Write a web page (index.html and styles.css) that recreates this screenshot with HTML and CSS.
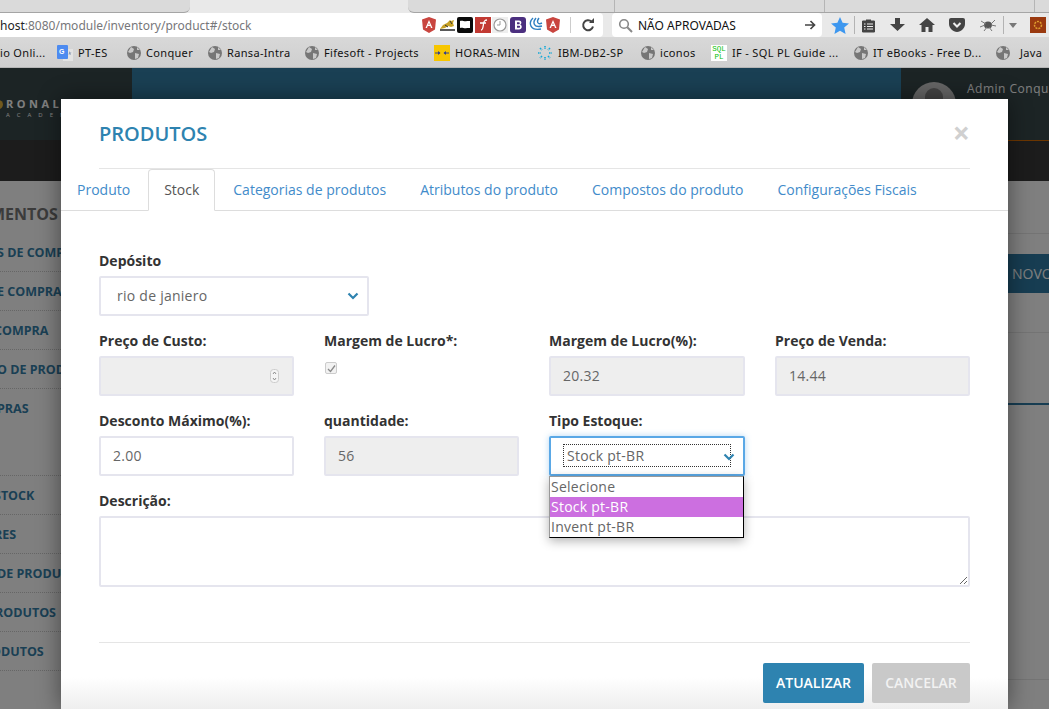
FILE: index.html
```html
<!DOCTYPE html>
<html lang="pt-BR">
<head>
<meta charset="utf-8">
<title>Produtos</title>
<link rel="stylesheet" href="styles.css">
</head>
<body>
<div class="browser">
  <div class="tabstrip">
    <div class="tab-side"></div>
    <div class="tab-active"></div>
    <div class="tab-rest"><i></i><i></i><i></i></div>
  </div>
  <div class="toolbar">
    <div class="address">
      <span class="url"><b>host</b>:8080/module/inventory/product#/stock</span>
      <div class="ext-icons">
        <svg width="16" height="16" viewBox="0 0 16 16"><path d="M8 0l7 2.500-1 10L8 16l-6-3.500-1-10z" fill="#c9453f"/><path d="M8 3l-3.500 8h1.500l.7-2h2.600l.7 2h1.500zM7.300 7.800L8 6l.7 1.800z" fill="#fff"/></svg>
        <svg width="17" height="16" viewBox="0 0 17 16"><path d="M1 12l3-4 4-2 3-3 1 1 3-1-1 3 1 3-3 1-3-1-3 2z" fill="#c9a227"/><path d="M1 13h15" stroke="#222" stroke-width="1.500"/><path d="M6 8l3 2M11 4l2 3" stroke="#333"/></svg>
        <svg width="16" height="16" viewBox="0 0 16 16"><rect width="16" height="16" rx="2" fill="#0a0a0a"/><path d="M3 4c3-1 4 1 7 0h3v7h-3c-3 1-4-1-7 0z" fill="#fff"/></svg>
        <svg width="16" height="16" viewBox="0 0 16 16"><rect width="16" height="16" fill="#c23a33"/><path d="M6 13c2 0 2-3 2.500-6s1-4 3.500-4M5 6h6" stroke="#fff" stroke-width="1.300" fill="none"/></svg>
        <svg width="16" height="16" viewBox="0 0 16 16"><rect width="16" height="16" fill="#eee"/><circle cx="8" cy="8" r="6" fill="#fff" stroke="#999" stroke-width="1.200"/><path d="M8 4v4H5" stroke="#999" fill="none"/></svg>
        <svg width="16" height="16" viewBox="0 0 16 16"><rect width="16" height="16" rx="3" fill="#4b2f7f"/><path d="M5 3.500h4c3 0 3 3.500 1 4 2.500.5 2.500 5-1 5H5zM7 5.200v2h2c1 0 1-2 0-2zM7 8.800v2h2.200c1.200 0 1.200-2 0-2z" fill="#fff" fill-rule="evenodd"/></svg>
        <svg width="16" height="16" viewBox="0 0 16 16"><path d="M6 1C1 6 3 14 14 12M9 1C5 6 7 11 15 9M12 1C9 5 11 8 15 6" stroke="#2f7fc1" stroke-width="1.400" fill="none"/></svg>
        <svg width="16" height="16" viewBox="0 0 16 16"><path d="M8 0l7 2.500-1 10L8 16l-6-3.500-1-10z" fill="#c9453f"/><path d="M8 3l-3.500 8h1.500l.7-2h2.600l.7 2h1.500zM7.300 7.800L8 6l.7 1.800z" fill="#fff"/></svg>
      </div>
      <span class="address-sep"></span>
      <svg class="reload" width="16" height="16" viewBox="0 0 16 16"><path d="M13 9.500A5 5 0 1 1 11.500 4.500" fill="none" stroke="#444" stroke-width="2"/><path d="M9 6h5V1z" fill="#444"/></svg>
    </div>
    <div class="search">
      <svg width="15" height="15" viewBox="0 0 15 15"><circle cx="6" cy="6" r="4.300" fill="none" stroke="#888" stroke-width="1.600"/><path d="M9.300 9.300l4.700 4.700" stroke="#888" stroke-width="2"/></svg>
      <span class="search-text">NÃO APROVADAS</span>
      <svg width="12" height="12" viewBox="0 0 12 12"><path d="M1 6h9M6.500 2l4 4-4 4" fill="none" stroke="#444" stroke-width="1.700"/></svg>
    </div>
    <div class="tools">
      <svg width="18" height="17" viewBox="0 0 18 17"><path d="M9 0l2.600 5.800 6.400.6-4.800 4.200 1.400 6.400L9 13.700 3.400 17l1.400-6.400L0 6.400l6.400-.6z" fill="#3d97ef"/></svg>
      <span class="tool-sep"></span>
      <svg width="15" height="15" viewBox="0 0 15 15"><path d="M1.500 3h12v11h-12z" fill="#444" stroke="#444" stroke-linejoin="round"/><path d="M5 1.500h5V4H5z" fill="#444"/><path d="M3 6h1.500M6 6h6M3 8.500h1.500M6 8.500h6M3 11h1.500M6 11h6" stroke="#eee"/></svg>
      <svg width="15" height="15" viewBox="0 0 15 15"><path d="M5 0h5v6h5l-7.500 7L0 6h5z" fill="#444"/></svg>
      <svg width="16" height="14" viewBox="0 0 16 14"><path d="M8 0L0 7h2.500v7h4V9h3v5h4V7H16z" fill="#444"/></svg>
      <svg width="16" height="14" viewBox="0 0 16 14"><path d="M2 0h12a2 2 0 0 1 2 2v4c0 4-4 8-8 8S0 10 0 6V2a2 2 0 0 1 2-2z" fill="#444"/><path d="M4.500 5L8 8.500 11.500 5" fill="none" stroke="#eee" stroke-width="2"/></svg>
      <svg width="18" height="14" viewBox="0 0 18 14"><ellipse cx="9" cy="7" rx="4" ry="3.500" fill="#555"/><path d="M1 9l5-2M2 3l5 3M16 2l-4 4M17 8l-5-1M5 13l3-4M13 13l-3-4" stroke="#777"/></svg>
      <span class="tool-sep tool-sep-b"></span>
      <svg width="8" height="5" viewBox="0 0 8 5"><path d="M0 0h8L4 5z" fill="#777"/></svg>
      <svg class="addon" width="16" height="16" viewBox="0 0 16 16"><rect width="16" height="16" fill="#9a3a10"/><circle cx="8" cy="8" r="3.500" fill="none" stroke="#e0a030" stroke-width="1.500" stroke-dasharray="2 1"/></svg>
    </div>
  </div>
  <div class="bookmarks">
    <div class="bm"><span>io Onli...</span></div>
    <div class="bm">
      <svg width="16" height="16" viewBox="0 0 16 16"><rect width="11" height="14" rx="1" fill="#4d8bf0"/><path d="M11 4h5v12H6v-2h5z" fill="#e3e3e3"/><path d="M12.500 6l.6 1.500 1.400.1-1 1 .4 1.400-1.400-.8-1 .6" fill="#8a9bb5"/><text x="2" y="9" class="gt">G</text></svg>
      <span>PT-ES</span></div>
    <div class="bm"><svg class="globe" width="14" height="14" viewBox="0 0 14 14"><circle cx="7" cy="7" r="7" fill="#767676"/><path d="M4 1l3 2-1 3-3 1-2-1zM8 7l4 1-1 4-3 1zM10 1l3 3-3 0z" fill="#c9c9c9"/></svg><span>Conquer</span></div>
    <div class="bm"><svg class="globe" width="14" height="14" viewBox="0 0 14 14"><circle cx="7" cy="7" r="7" fill="#767676"/><path d="M4 1l3 2-1 3-3 1-2-1zM8 7l4 1-1 4-3 1zM10 1l3 3-3 0z" fill="#c9c9c9"/></svg><span>Ransa-Intra</span></div>
    <div class="bm"><svg class="globe" width="14" height="14" viewBox="0 0 14 14"><circle cx="7" cy="7" r="7" fill="#767676"/><path d="M4 1l3 2-1 3-3 1-2-1zM8 7l4 1-1 4-3 1zM10 1l3 3-3 0z" fill="#c9c9c9"/></svg><span>Fifesoft - Projects</span></div>
    <div class="bm"><svg width="16" height="16" viewBox="0 0 16 16"><rect width="16" height="16" fill="#f7c600"/><path d="M1 8h5M10 8h5" stroke="#33408f" stroke-width="1.200"/><path d="M6.500 8L4 6v4zM9.500 8L12 6v4z" fill="#33408f"/></svg><span>HORAS-MIN</span></div>
    <div class="bm"><svg width="16" height="16" viewBox="0 0 16 16"><path d="M8 1v3M8 12v3M1 8h3M12 8h3M3 3l2 2M11 11l2 2M13 3l-2 2M5 11l-2 2" stroke="#12a8d8" stroke-width="1.600" stroke-dasharray="1.500 .8"/></svg><span>IBM-DB2-SP</span></div>
    <div class="bm"><svg class="globe" width="14" height="14" viewBox="0 0 14 14"><circle cx="7" cy="7" r="7" fill="#767676"/><path d="M4 1l3 2-1 3-3 1-2-1zM8 7l4 1-1 4-3 1zM10 1l3 3-3 0z" fill="#c9c9c9"/></svg><span>iconos</span></div>
    <div class="bm"><div class="sql">SQL<br>PL</div><span>IF - SQL PL Guide ...</span></div>
    <div class="bm"><svg class="globe" width="14" height="14" viewBox="0 0 14 14"><circle cx="7" cy="7" r="7" fill="#767676"/><path d="M4 1l3 2-1 3-3 1-2-1zM8 7l4 1-1 4-3 1zM10 1l3 3-3 0z" fill="#c9c9c9"/></svg><span>IT eBooks - Free D...</span></div>
    <div class="bm bm-last"><svg class="globe" width="14" height="14" viewBox="0 0 14 14"><circle cx="7" cy="7" r="7" fill="#767676"/><path d="M4 1l3 2-1 3-3 1-2-1zM8 7l4 1-1 4-3 1zM10 1l3 3-3 0z" fill="#c9c9c9"/></svg><span>Java</span></div>
  </div>
</div>

<div class="page">
  <header class="app-header">
    <div class="brand">
      <div class="brand-top"><span class="brand-dot"></span><span>RONALD</span></div>
      <div class="brand-sub">ACADEMY</div>
    </div>
    <div class="header-blue"></div>
    <div class="user">
      <div class="avatar"><span></span></div>
      <span class="user-name">Admin Conquer</span>
    </div>
  </header>
  <div class="app-body">
    <aside class="sidebar">
      <div class="side-title">MENTOS</div>
      <div class="side-item shift-3">S DE COMPRAS</div>
      <div class="side-item shift-3">E COMPRA</div>
      <div class="side-item shift-6">COMPRA</div>
      <div class="side-item shift-3">O DE PRODUTOS</div>
      <div class="side-item side-item-tall shift-3">PRAS</div>
      <div class="side-item shift-6">STOCK</div>
      <div class="side-item shift-6">RES</div>
      <div class="side-item shift-3">DE PRODUTOS</div>
      <div class="side-item shift-5">RODUTOS</div>
      <div class="side-item shift-9">ODUTOS</div>
    </aside>
    <main class="content">
      <div class="content-head"></div>
      <div class="content-action"><span class="btn-new">NOVO</span></div>
      <div class="content-gap"></div>
      <div class="content-table"></div>
    </main>
  </div>
  <div class="backdrop"></div>

  <section class="modal">
    <div class="modal-head">
      <h2 class="modal-title">PRODUTOS</h2>
      <span class="modal-close">×</span>
    </div>
    <nav class="tabs">
      <a class="tab">Produto</a>
      <a class="tab tab-on">Stock</a>
      <a class="tab">Categorias de produtos</a>
      <a class="tab">Atributos do produto</a>
      <a class="tab">Compostos do produto</a>
      <a class="tab">Configurações Fiscais</a>
    </nav>
    <form class="form">
      <div class="field field-deposit">
        <label>Depósito</label>
        <div class="control select-box">
          <span class="select-value">rio de janiero</span>
          <svg class="chev" width="12" height="8" viewBox="0 0 12 8"><path d="M1.500 1.500L6 6l4.500-4.500" fill="none" stroke="#2e83b0" stroke-width="2.200"/></svg>
        </div>
      </div>
      <div class="grid">
        <div class="field">
          <label>Preço de Custo:</label>
          <div class="control off">
            <svg class="spin" width="9" height="14" viewBox="0 0 9 14"><rect x=".5" y=".5" width="8" height="13" rx="3" fill="#f4f4f4" stroke="#ccc"/><path d="M3 5l1.500-2L6 5M3 9l1.500 2L6 9" fill="none" stroke="#777" stroke-width=".8"/></svg>
          </div>
        </div>
        <div class="field">
          <label>Margem de Lucro*:</label>
          <span class="check"><svg width="9" height="9" viewBox="0 0 9 9"><path d="M1 5l2.500 2.500L8 1.500" fill="none" stroke="#8a8a8a" stroke-width="1.300"/></svg></span>
        </div>
        <div class="field">
          <label>Margem de Lucro(%):</label>
          <div class="control off">20.32</div>
        </div>
        <div class="field">
          <label>Preço de Venda:</label>
          <div class="control off">14.44</div>
        </div>
        <div class="field">
          <label>Desconto Máximo(%):</label>
          <div class="control">2.00</div>
        </div>
        <div class="field">
          <label>quantidade:</label>
          <div class="control off">56</div>
        </div>
        <div class="field">
          <label>Tipo Estoque:</label>
          <div class="control control-focus">
            <span class="focus-ring">Stock pt-BR</span>
            <svg class="chev chev-focus" width="12" height="8" viewBox="0 0 12 8"><path d="M1.500 1.500L6 6l4.500-4.500" fill="none" stroke="#2e83b0" stroke-width="2.200"/></svg>
            <ul class="dropdown">
              <li>Selecione</li>
              <li class="picked">Stock pt-BR</li>
              <li>Invent pt-BR</li>
            </ul>
          </div>
        </div>
      </div>
      <div class="field field-desc">
        <label for="desc">Descrição:</label>
        <textarea id="desc" class="desc"></textarea>
      </div>
    </form>
    <footer class="modal-foot">
      <button class="btn btn-primary" type="button">ATUALIZAR</button>
      <button class="btn btn-muted" type="button">CANCELAR</button>
    </footer>
  </section>
</div>
</body>
</html>
```
FILE: styles.css
```css
* { box-sizing: border-box; }
html, body { margin: 0; padding: 0; height: 100%; overflow: hidden; background: #808080; }
body { width: 1049px; height: 709px; display: flex; flex-direction: column; font-family: "Open Sans", "Noto Sans", sans-serif; }

/* browser chrome */
.browser { flex: none; height: 68px; font-family: "Noto Sans", "DejaVu Sans", sans-serif; color: #111; }
.tabstrip { display: flex; height: 13px; background: #e9e9e9; }
.tab-side { width: 190px; background: #dadada; border-bottom: 1px solid #a5a5a5; border-bottom-right-radius: 6px; }
.tab-active { width: 218px; background: #e9e9e9; }
.tab-rest { flex: 1; background: #dadada; border-bottom: 1px solid #a5a5a5; border-bottom-left-radius: 6px; display: flex; padding-left: 206px; gap: 209px; }
.tab-rest i { width: 1px; background: #b5b5b5; }
.toolbar { display: flex; height: 24px; background: #e9e9e9; }
.address { width: 603px; background: #fff; border-radius: 0 4px 4px 0; display: flex; align-items: center; overflow: hidden; }
.url { width: 421px; font-size: 12px; color: #77777a; white-space: nowrap; }
.url b { font-weight: 400; color: #222; }
.ext-icons { width: 140px; display: flex; gap: 1.500px; align-items: center; }
.address-sep { width: 1px; height: 16px; background: #ccc; margin-left: 9px; }
.reload { margin-left: 9px; }
.search { width: 210px; margin-left: 9px; background: #fff; border-radius: 4px; display: flex; align-items: center; padding: 0 6px 0 6px; }
.search-text { flex: 1; font-size: 12px; margin-left: 5px; color: #111; white-space: nowrap; }
.tools { flex: 1; display: flex; align-items: center; padding-left: 9px; gap: 14px; }
.tool-sep { width: 1px; height: 18px; background: #b3b3b3; margin: 0 -8px 0 -9px; }
.tool-sep-b { margin: 0 -9px 0 -8px; }
.addon { margin-left: -1px; }
.bookmarks { height: 31px; padding-top: 1px; background: linear-gradient(#d8d8d8, #cfcfcf); border-bottom: 1px solid #b5b5b5; display: grid; grid-template-columns: 57px 70px 81px 97px 129px 103px 104px 70px 143px 142px 1fr; align-items: center; }
.bm { display: flex; align-items: center; gap: 5px; font-size: 11px; letter-spacing: .33px; white-space: nowrap; overflow: hidden; }
.bm-last { gap: 10px; }
.globe { flex: none; }
.gt { font: bold 7px "Liberation Sans", sans-serif; fill: #fff; }
.sql { width: 16px; height: 16px; flex: none; background: #fff; color: #06c006; font: 7.500px/8px "Liberation Mono", monospace; letter-spacing: 0; text-align: center; }

/* application behind the modal */
.page { flex: 1; position: relative; overflow: hidden; background: #fff; }
.app-header { height: 113px; display: flex; background: linear-gradient(#38484a 0, #38484a 72px, #383838 72px); }
.brand { width: 132px; padding-top: 30px; overflow: hidden; color: #fff; white-space: nowrap; }
.brand-top { display: flex; align-items: center; gap: 3px; font-weight: 700; font-size: 11px; line-height: 12px; letter-spacing: 3.500px; margin-left: -6px; }
.brand-dot { width: 9px; height: 9px; border-radius: 50%; background: #e3b23c; flex: none; }
.brand-sub { font-size: 6px; line-height: 10px; letter-spacing: 7px; margin-left: 6px; }
.header-blue { width: 769px; height: 113px; background: #3480a8; }
.user { flex: 1; display: flex; gap: 11px; padding: 14px 0 0 11px; background: linear-gradient(#38484a 0, #38484a 72px, #d96c00 72px, #d96c00 73px, #383838 73px); overflow: hidden; white-space: nowrap; }
.avatar { width: 44px; height: 44px; border-radius: 50%; background: #ccc; flex: none; overflow: hidden; display: flex; justify-content: center; }
.avatar span { width: 18px; height: 26px; border-radius: 9px; background: #888; margin-top: 6px; }
.user-name { font-size: 12px; line-height: 14px; color: #fff; letter-spacing: .5px; }
.app-body { display: flex; height: 528px; }
.sidebar { width: 61px; flex: none; overflow: hidden; white-space: nowrap; }
.side-title { height: 52px; padding-top: 23px; font-size: 16px; line-height: 20px; font-weight: 700; color: #777; text-indent: -10px; }
.side-item { height: 39px; line-height: 40px; font-size: 12.500px; font-weight: 700; color: #357fa8; border-bottom: 1px dotted #ccc; }
.side-item-tall { height: 87px; }
.shift-3 { text-indent: -3px; }
.shift-5 { text-indent: -5px; }
.shift-6 { text-indent: -6px; }
.shift-9 { text-indent: -9px; }
.content { flex: 1; overflow: hidden; }
.content-head { height: 53px; border-bottom: 1px solid #e8e8e8; }
.content-action { height: 99px; padding: 20px 0 0 947px; border-bottom: 1px solid #e8e8e8; white-space: nowrap; }
.btn-new { display: block; height: 39px; line-height: 39px; background: #2e7ba5; color: #fff; font-size: 14px; padding-left: 4px; }
.content-gap { height: 72px; border-bottom: 2px solid #2e7ba5; }
.content-table { height: 275px; border-bottom: 1px solid #e8e8e8; }
.backdrop { position: absolute; inset: 0; background: rgba(0, 0, 0, .5); }

/* modal */
.modal { position: absolute; left: 61px; top: 31px; width: 947px; height: 610px; background: linear-gradient(#fff calc(100% - 32px), #eee); box-shadow: 0 0 22px rgba(0, 0, 0, .45); color: #333; }
.modal-head { height: 70px; margin: 0 38px; border-bottom: 1px solid #e5e5e5; display: flex; justify-content: space-between; align-items: center; }
.modal-title { margin: 0; font-size: 20px; font-weight: 600; color: #2e83b0; line-height: 28px; }
.modal-close { font-size: 30px; line-height: 28px; font-weight: 700; color: #d0d0d0; margin-top: -2px; }
.tabs { display: flex; gap: 2px; height: 42px; border-bottom: 1px solid #ddd; }
.tab { height: 42px; padding: 0 15px; border: 1px solid transparent; font-size: 14px; line-height: 40px; color: #428bca; white-space: nowrap; }
.tab-on { background: #fff; color: #555; border-color: #ddd; border-bottom-color: #fff; border-radius: 4px 4px 0 0; }
.form { padding: 40px 38px 0; }
.field label { display: block; height: 20px; margin-bottom: 5px; font-size: 14px; line-height: 20px; font-weight: 700; color: #333; white-space: nowrap; }
.field-deposit { width: 270px; margin-bottom: 15px; }
.grid { display: grid; grid-template-columns: 195px 195px 196px 195px; column-gap: 30px; row-gap: 15px; }
.control { position: relative; height: 40px; border: 2px solid #e5e5ee; border-radius: 2px; background: #fff; font-size: 14px; letter-spacing: .25px; line-height: 36px; color: #666; padding-left: 12px; }
.off { background: #eee; }
.select-box { padding-left: 16px; }
.chev { position: absolute; right: 8px; top: 14px; }
.spin { position: absolute; right: 13px; top: 11px; }
.check { display: flex; align-items: center; justify-content: center; width: 12px; height: 12px; margin: 11px 0 0 1px; border: 1px solid #ccc; border-radius: 2px; background: #f2f2f2; }
.control-focus { border-color: #5aa8e6; box-shadow: 0 0 6px rgba(90, 168, 230, .45); padding: 6px 0 0 12px; line-height: 21px; }
.focus-ring { display: block; width: 168px; height: 23px; border: 1px dotted #333; padding-left: 3px; color: #666; }
.chev-focus { right: 8px; top: 15px; }
.dropdown { position: absolute; left: -2px; top: 38px; width: 195px; height: 62px; margin: 0; padding: 0; list-style: none; background: #fff; border: 1px solid #000; border-top-color: #999; border-left-color: #999; box-shadow: 0 3px 10px rgba(0, 0, 0, .3); z-index: 2; }
.dropdown li { height: 20px; line-height: 20px; font-size: 14px; color: #666; padding-left: 1px; }
.dropdown .picked { background: #cc6fe0; color: #fff; }
.field-desc { margin-top: 15px; }
.desc { display: block; width: 100%; height: 71px; border: 2px solid #e5e5ee; border-radius: 2px; background: #fff; resize: both; outline: 0; }
.modal-foot { margin: 55px 38px 0; border-top: 1px solid #e5e5e5; padding-top: 20px; display: flex; justify-content: flex-end; gap: 8px; }
.btn { height: 40px; border: 0; border-radius: 2px; padding: 0; font: 600 14px/40px "Open Sans", sans-serif; color: #fff; }
.btn-primary { width: 101px; background: #2e83b0; }
.btn-muted { width: 98px; background: #c9c9c9; color: #f2f2f2; }
```
